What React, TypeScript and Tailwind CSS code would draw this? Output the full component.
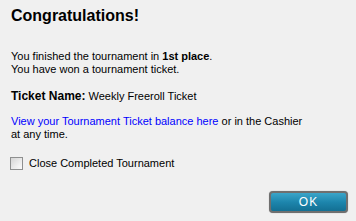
import React from "react";

const App = () => {
  return (
    <div
      className="w-[356px] h-[221px] bg-[#f0f0f0] text-black flex flex-col"
      style={{ fontFamily: '"Liberation Sans", Arial, sans-serif' }}
    >
      <h1 className="pl-[11px] pt-[7px] text-[16px] leading-[18px] font-bold">
        Congratulations!
      </h1>
      <div className="pl-[11px] mt-[25px] text-[11px] leading-[13px]">
        <p>
          You finished the tournament in <b>1st place</b>.
        </p>
        <p>You have won a tournament ticket.</p>
      </div>
      <p className="pl-[11px] mt-[14px] text-[11px] leading-[13px]">
        <b className="text-[12px]">Ticket Name:</b> Weekly Freeroll Ticket
      </p>
      <p className="pl-[11px] mt-[12px] w-[310px] text-[11px] leading-[13px]">
        <a className="text-[#0000ff] cursor-pointer">
          View your Tournament Ticket balance here
        </a>{" "}
        or in the Cashier
        <br />
        at any time.
      </p>
      <label className="pl-[10px] mt-[16px] flex items-center gap-[6px] text-[11px] leading-[13px]">
        <span className="w-[13px] h-[13px] border border-[#8e8f8f] bg-gradient-to-br from-[#d6d6d6] to-[#fbfbfb] p-[2px] flex">
          <span className="flex-1 bg-gradient-to-br from-[#dcdcdc] to-[#f8f8f8]" />
        </span>
        Close Completed Tournament
      </label>
      <div className="flex justify-end pr-[8px] mt-[21px]">
        <button className="w-[79px] h-[22px] rounded-[4px] bg-[#6f6f6f] p-[2px] shadow-[0_0_1px_#9a9a9a]">
          <span className="flex h-full items-center justify-center rounded-[2px] bg-gradient-to-b from-[#3aa5c9] via-[#1d86ad] to-[#136f93] text-white text-[12px] tracking-[1px]">
            OK
          </span>
        </button>
      </div>
    </div>
  );
};

export default App;
